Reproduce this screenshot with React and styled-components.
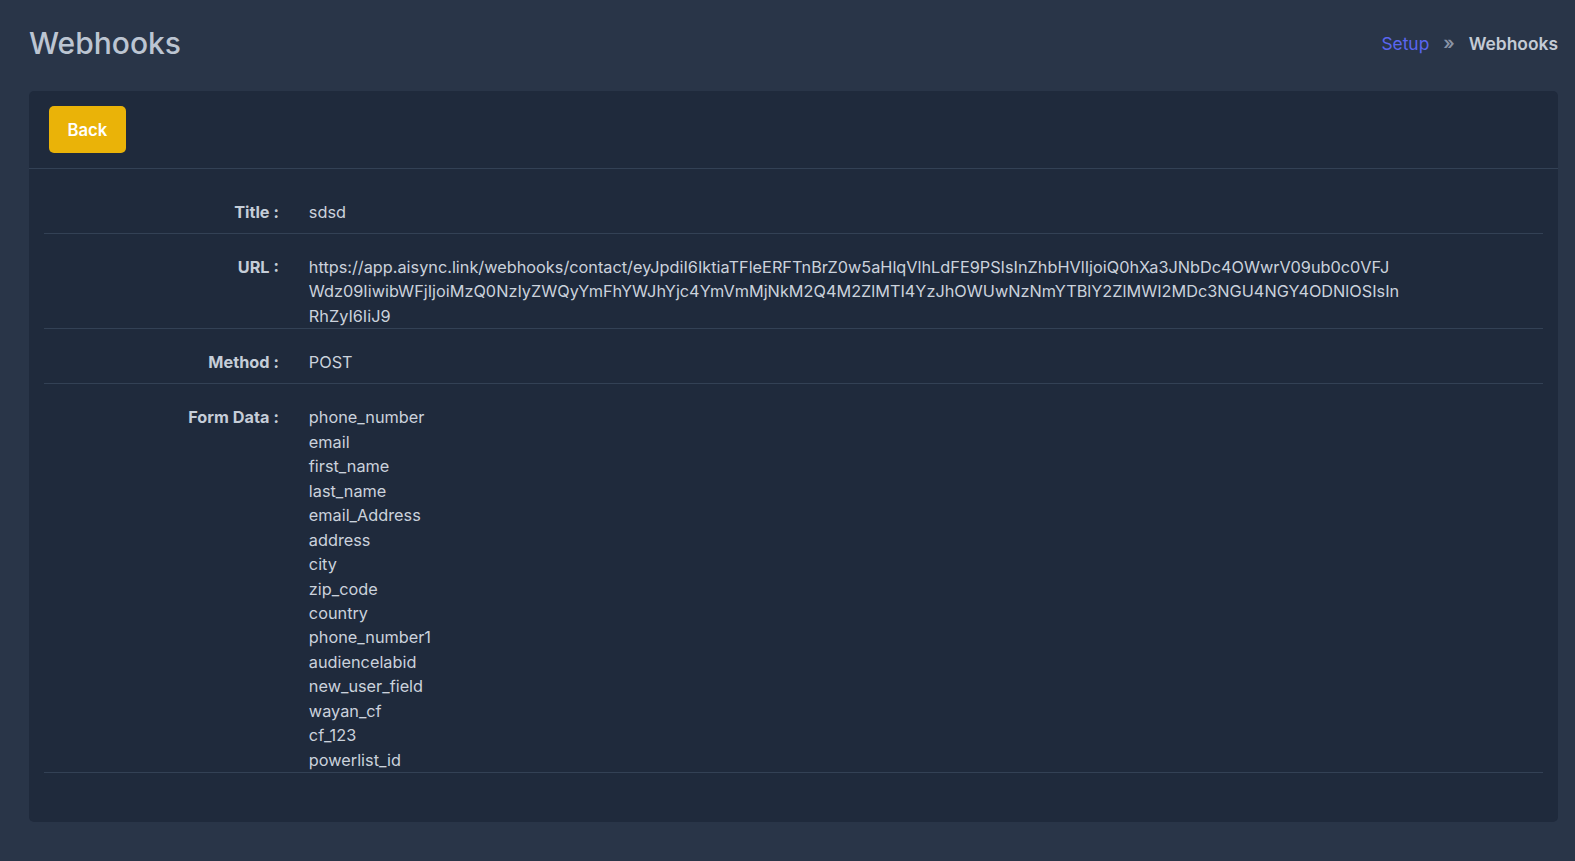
import React from "react";
import styled, { createGlobalStyle } from "styled-components";

const GlobalStyle = createGlobalStyle`
  * { box-sizing: border-box; }
  html, body { margin: 0; padding: 0; background: #293548; overflow: hidden; }
  body {
    font-family: Inter, "Noto Sans", "Liberation Sans", sans-serif;
    color: #cbd2dc;
  }
`;

const Page = styled.div`
  padding: 22px 17px 0 29px;
`;

const PageHeader = styled.div`
  display: flex;
  align-items: center;
  justify-content: space-between;
  height: 42px;
  margin-bottom: 27px;
`;

const PageTitle = styled.h1`
  margin: 0;
  font-size: 30px;
  font-weight: 500;
  color: #bcc5d2;
`;

const Breadcrumb = styled.nav`
  display: flex;
  align-items: center;
  gap: 14px;
  font-size: 17.4px;
`;

const Crumb = styled.span`
  color: ${(p) => (p.$active ? "#c3cbd6" : "#5a66f0")};
  font-weight: ${(p) => (p.$active ? 600 : 400)};
`;

const Sep = styled.span`
  color: #8a94a6;
  font-size: 18px;
  font-weight: 600;
  line-height: 1;
`;

const Card = styled.div`
  background: #1f2a3c;
  border-radius: 5px;
`;

const CardHeader = styled.div`
  padding: 15px 20px;
  border-bottom: 1px solid #334155;
`;

const Button = styled.button`
  height: 47px;
  padding: 0 18.5px;
  border: none;
  border-radius: 5px;
  background: #eab308;
  color: #ffffff;
  font-family: inherit;
  font-size: 16.7px;
  font-weight: 600;
  cursor: pointer;
`;

const CardBody = styled.div`
  padding: 10px 15px 49px;
`;

const Row = styled.div`
  display: flex;
  min-height: 55px;
  padding-top: 21px;
  border-bottom: 1px solid #334155;
  font-size: 16.3px;
  line-height: 24.45px;
`;

const Label = styled.div`
  flex: 0 0 calc(100% * 2 / 12);
  padding: 0 15px;
  text-align: right;
  font-weight: 700;
  color: #c5cdd8;
`;

const Value = styled.div`
  flex: 0 0 calc(100% * 9 / 12);
  padding: 0 15px;
  word-break: break-all;
  color: #cbd2dc;
`;

const Line = styled.div``;

const url =
  "https://app.aisync.link/webhooks/contact/eyJpdiI6IktiaTFleERFTnBrZ0w5aHlqVlhLdFE9PSIsInZhbHVlIjoiQ0hXa3JNbDc4OWwrV09ub0c0VFJWdz09IiwibWFjIjoiMzQ0NzIyZWQyYmFhYWJhYjc4YmVmMjNkM2Q4M2ZlMTI4YzJhOWUwNzNmYTBlY2ZlMWI2MDc3NGU4NGY4ODNlOSIsInRhZyI6IiJ9";

const fields = [
  "phone_number",
  "email",
  "first_name",
  "last_name",
  "email_Address",
  "address",
  "city",
  "zip_code",
  "country",
  "phone_number1",
  "audiencelabid",
  "new_user_field",
  "wayan_cf",
  "cf_123",
  "powerlist_id",
];

export default function App() {
  return (
    <>
      <GlobalStyle />
      <Page>
        <PageHeader>
          <PageTitle>Webhooks</PageTitle>
          <Breadcrumb>
            <Crumb>Setup</Crumb>
            <Sep>»</Sep>
            <Crumb $active>Webhooks</Crumb>
          </Breadcrumb>
        </PageHeader>
        <Card>
          <CardHeader>
            <Button>Back</Button>
          </CardHeader>
          <CardBody>
            <Row>
              <Label>Title :</Label>
              <Value>sdsd</Value>
            </Row>
            <Row>
              <Label>URL :</Label>
              <Value>{url}</Value>
            </Row>
            <Row>
              <Label>Method :</Label>
              <Value>POST</Value>
            </Row>
            <Row>
              <Label>Form Data :</Label>
              <Value>
                {fields.map((f) => (
                  <Line key={f}>{f}</Line>
                ))}
              </Value>
            </Row>
          </CardBody>
        </Card>
      </Page>
    </>
  );
}
